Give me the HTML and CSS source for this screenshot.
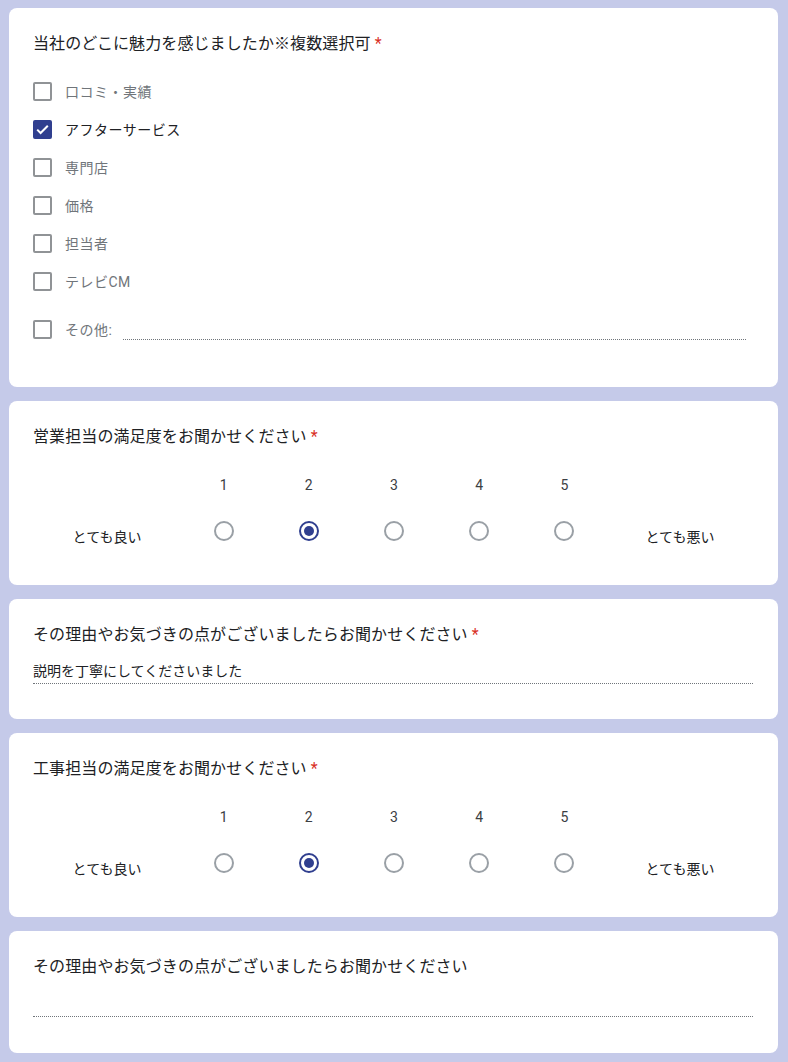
FILE: index.html
```html
<!DOCTYPE html>
<html lang="ja">
<head>
  <meta charset="UTF-8" />
  <meta name="viewport" content="width=device-width, initial-scale=1.0"/>
  <title>アンケート</title>
  <link rel="stylesheet" href="styles.css">
</head>
<body>

  <div class="card card-multi">
    <div class="title">当社のどこに魅力を感じましたか※複数選択可 <span class="req">*</span></div>
    <div class="options">
      <div class="opt"><span class="box"></span><span class="label">口コミ・実績</span></div>
      <div class="opt checked">
        <span class="box">
          <svg viewBox="0 0 19 19" width="19" height="19"><path d="M4.2 9.6l3.4 3.4L14.8 5.8" fill="none" stroke="#fff" stroke-width="2"/></svg>
        </span>
        <span class="label">アフターサービス</span>
      </div>
      <div class="opt"><span class="box"></span><span class="label">専門店</span></div>
      <div class="opt"><span class="box"></span><span class="label">価格</span></div>
      <div class="opt"><span class="box"></span><span class="label">担当者</span></div>
      <div class="opt"><span class="box"></span><span class="label">テレビCM</span></div>
      <div class="opt other"><span class="box"></span><span class="label">その他:</span><span class="other-input"></span></div>
    </div>
  </div>

  <div class="card card-scale">
    <div class="title">営業担当の満足度をお聞かせください <span class="req">*</span></div>
    <div class="scale">
      <span></span>
      <span class="num">1</span><span class="num">2</span><span class="num">3</span><span class="num">4</span><span class="num">5</span>
      <span></span>
      <span class="end">とても良い</span>
      <span class="cell"><span class="radio"></span></span>
      <span class="cell"><span class="radio on"></span></span>
      <span class="cell"><span class="radio"></span></span>
      <span class="cell"><span class="radio"></span></span>
      <span class="cell"><span class="radio"></span></span>
      <span class="end">とても悪い</span>
    </div>
  </div>

  <div class="card card-text">
    <div class="title">その理由やお気づきの点がございましたらお聞かせください <span class="req">*</span></div>
    <div class="answer">説明を丁寧にしてくださいました</div>
  </div>

  <div class="card card-scale">
    <div class="title">工事担当の満足度をお聞かせください <span class="req">*</span></div>
    <div class="scale">
      <span></span>
      <span class="num">1</span><span class="num">2</span><span class="num">3</span><span class="num">4</span><span class="num">5</span>
      <span></span>
      <span class="end">とても良い</span>
      <span class="cell"><span class="radio"></span></span>
      <span class="cell"><span class="radio on"></span></span>
      <span class="cell"><span class="radio"></span></span>
      <span class="cell"><span class="radio"></span></span>
      <span class="cell"><span class="radio"></span></span>
      <span class="end">とても悪い</span>
    </div>
  </div>

  <div class="card card-text last">
    <div class="title">その理由やお気づきの点がございましたらお聞かせください</div>
    <div class="answer empty"></div>
  </div>

</body>
</html>
```

FILE: styles.css
```css
body { margin: 0; padding: 8px 10px 8px 9px; background: #c5cae9; font-family: Roboto, "Noto Sans CJK JP", sans-serif; color: #202124; }
.card { background: #fff; border-radius: 8px; padding: 24px 25px 30px 24px; margin-bottom: 14px; }
.title { font-size: 16px; line-height: 24px; letter-spacing: 0.1px; color: #202124; }
.req { color: #d93025; }

.card-multi { padding-bottom: 39px; }
.options { margin-top: 16px; }
.opt { display: flex; align-items: center; height: 38px; }
.box { width: 19px; height: 19px; box-sizing: border-box; border: 2px solid #909396; border-radius: 2px; margin-right: 13px; display: flex; }
.opt.checked .box { background: #303f8f; border-color: #303f8f; }
.opt.checked .box svg { margin: -2px; }
.label { font-size: 14px; letter-spacing: 0.5px; color: #70757a; }
.opt.checked .label { color: #202124; }
.opt.other { margin-top: 10px; }
.other-input { flex: 1; align-self: flex-end; margin: 0 7px 8px 11px; border-bottom: 1px dotted #70757a; }

.card-scale { padding-bottom: 30px; }
.scale { display: grid; grid-template-columns: 148px repeat(5, 1fr) 146px; grid-template-rows: 24px 48px; margin-top: 24px; row-gap: 10px; font-size: 14px; }
.num { text-align: center; line-height: 24px; color: #3c4043; }
.end { display: flex; align-items: center; justify-content: center; margin-top: 10px; color: #202124; }
.cell { display: flex; align-items: center; justify-content: center; }
.radio { width: 20px; height: 20px; box-sizing: border-box; border: 2px solid #9aa0a6; border-radius: 50%; display: flex; align-items: center; justify-content: center; }
.radio.on { border-color: #303f8f; }
.radio.on::after { content: ""; width: 10px; height: 10px; border-radius: 50%; background: #303f8f; }

.card-text { padding-bottom: 35px; }
.answer { margin-top: 14px; font-size: 14px; line-height: 20px; padding-bottom: 2px; border-bottom: 1px dotted #70757a; color: #202124; }
.answer.empty { margin-top: 16px; height: 20px; padding-bottom: 1px; }
.card-text.last { padding-bottom: 36px; margin-bottom: 0; }
```
